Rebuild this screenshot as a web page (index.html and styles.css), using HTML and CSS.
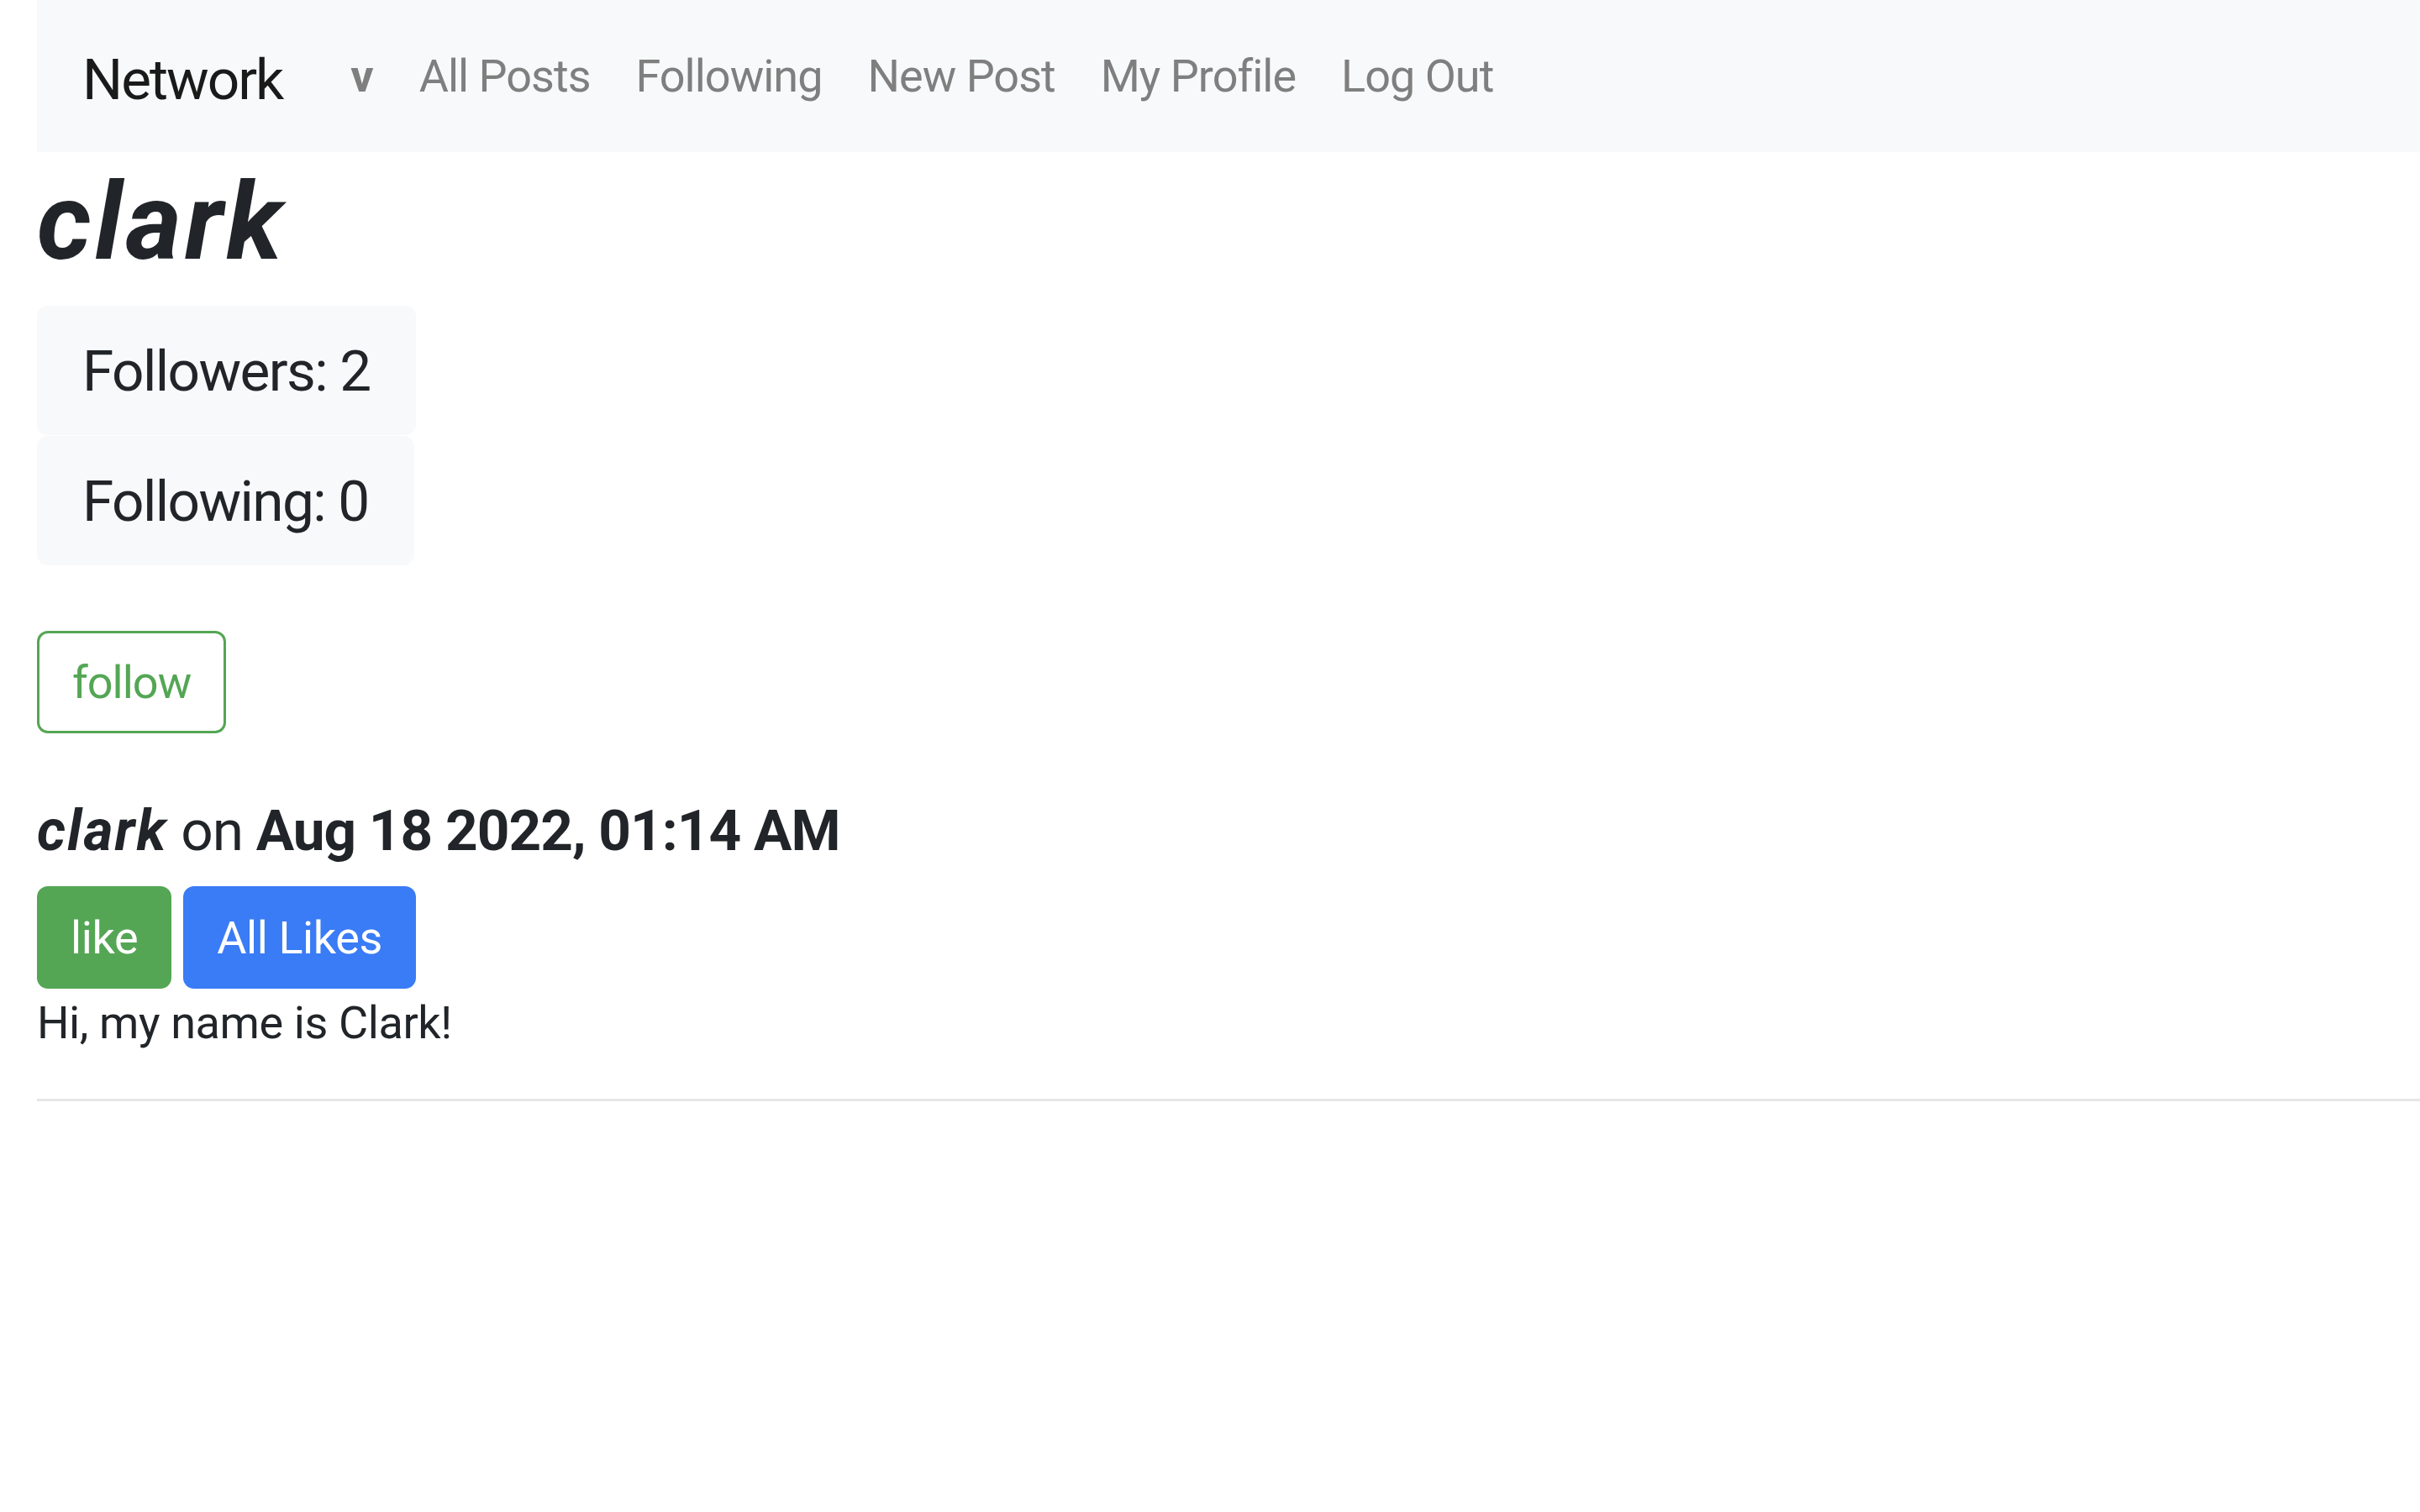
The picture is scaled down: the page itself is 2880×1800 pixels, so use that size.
FILE: index.html
```html
<!DOCTYPE html>
<html lang="en">
<head>
<meta charset="utf-8">
<title>Network</title>
<link rel="stylesheet" href="styles.css">
</head>
<body>
<nav class="navbar">
  <a class="brand" href="#">Network</a>
  <ul class="nav">
    <li><a class="nav-link nav-user" href="#">v</a></li>
    <li><a class="nav-link" href="#">All Posts</a></li>
    <li><a class="nav-link" href="#">Following</a></li>
    <li><a class="nav-link" href="#">New Post</a></li>
    <li><a class="nav-link" href="#">My Profile</a></li>
    <li><a class="nav-link" href="#">Log Out</a></li>
  </ul>
</nav>
<main class="profile">
  <h1 class="username">clark</h1>
  <div class="stats">
    <div class="stat">Followers: 2</div>
    <div class="stat">Following: 0</div>
  </div>
  <button class="btn btn-outline-success follow">follow</button>
  <section class="post">
    <h5 class="post-head"><em class="author">clark</em> on <span class="when">Aug 18 2022, 01:14 AM</span></h5>
    <div class="post-actions">
      <button class="btn btn-success">like</button>
      <button class="btn btn-primary">All Likes</button>
    </div>
    <p class="post-body">Hi, my name is Clark!</p>
    <hr class="divider">
  </section>
</main>
</body>
</html>
```
FILE: styles.css
```css
html, body {
  margin: 0;
  padding: 0;
  background: #ffffff;
}
body {
  padding-left: 44px;
  font-family: Roboto, Inter, "Liberation Sans", sans-serif;
  font-size: 54px;
  line-height: 81px;
  color: #212529;
  letter-spacing: -0.4px;
}
a { text-decoration: none; }

.navbar {
  display: flex;
  align-items: center;
  height: 181px;
  padding: 0 54px;
  background: #f8f9fa;
}
.brand {
  font-size: 67.5px;
  line-height: 101px;
  color: #1a1a1a;
  margin-right: 54px;
  letter-spacing: -2px;
  position: relative;
  top: 4px;
}
.nav {
  display: flex;
  list-style: none;
  margin: 0;
  padding: 0;
}
.nav-link {
  display: block;
  padding: 0 27px;
  color: #7f7f7f;
  font-size: 54px;
  line-height: 81px;
  letter-spacing: -1px;
}
.nav-user { font-weight: 700; letter-spacing: 0; }

.profile { display: block; }

.username {
  margin: 6px 0 0;
  font-size: 128px;
  line-height: 154px;
  font-weight: 700;
  font-style: italic;
  letter-spacing: 4px;
  color: #212529;
}
.stats {
  display: flex;
  flex-direction: column;
  align-items: flex-start;
  gap: 1px;
  margin-top: 23px;
}
.stat {
  background: #f8f9fa;
  border-radius: 13px;
  padding: 36.5px 54px;
  font-size: 67.5px;
  line-height: 81px;
  letter-spacing: -1.6px;
}

.btn {
  font-family: inherit;
  font-size: 54px;
  line-height: 81px;
  letter-spacing: -0.4px;
  border-radius: 13px;
  cursor: pointer;
  margin: 0;
}
.follow {
  display: block;
  margin-top: 78px;
  padding: 17.5px 39px;
  border: 3px solid #54a654;
  background: #ffffff;
  color: #54a654;
  letter-spacing: -1px;
}
.post-head {
  margin: 75px 0 26px;
  font-size: 67.5px;
  line-height: 81px;
  font-weight: 400;
  letter-spacing: -1px;
}
.author { font-weight: 700; font-style: italic; letter-spacing: 2px; }
.when { font-weight: 700; }
.post-actions {
  display: flex;
  gap: 14px;
}
.btn-success, .btn-primary {
  border: 0;
  padding: 20.5px 40px;
  color: #ffffff;
}
.btn-success { background: #54a654; }
.btn-primary { background: #3a7bf6; }
.post-body {
  margin: 0;
}
.divider {
  margin: 50px 0 0;
  border: 0;
  border-top: 3px solid #e6e6e6;
  height: 0;
}
```
